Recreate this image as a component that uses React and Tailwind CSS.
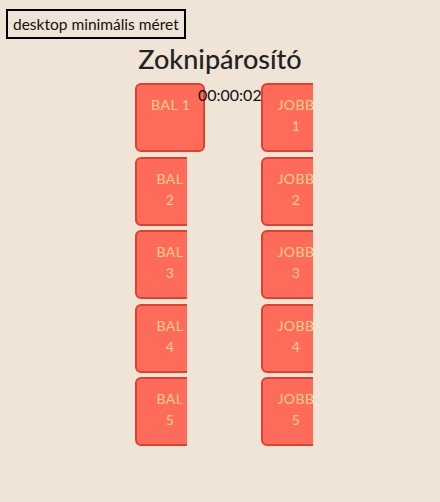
import React from "react";

const rows = [1, 2, 3, 4, 5];

const Sock = ({ label, n, wrap }) => (
  <div className="w-[70px] h-[69px] shrink-0 rounded-[6px] border-2 border-[#e0412f] bg-[#ff6b5b] px-[14px] pt-[9px] text-center text-[14px] leading-[21px] tracking-[0.5px] text-[#fcd28a] font-['Comic_Sans_MS','Lato',sans-serif]">
    {wrap ? (
      <>
        {label}
        <br />
        {n}
      </>
    ) : (
      <span className="whitespace-nowrap">{`${label} ${n}`}</span>
    )}
  </div>
);

const App = () => {
  return (
    <div className="min-h-screen bg-[#f0e4d7] font-['Lato',sans-serif] text-[#111]">
      <div className="pt-[9px] pl-[6px]">
        <div className="inline-block border-2 border-black px-[5px] py-[4px] text-[15.5px] leading-[18px]">
          desktop minimális méret
        </div>
      </div>

      <h1 className="mt-[2px] text-center text-[27px] leading-[36px] font-medium text-[#222] font-['Comic_Sans_MS','Lato',sans-serif]">
        Zoknipárosító
      </h1>

      <div className="mt-[6px] flex flex-col gap-[4.5px] pl-[135px]">
        {rows.map((n) => (
          <div key={n} className="flex h-[69px]">
            <div className={n === 1 ? "w-[52px] relative z-0" : "w-[52px] overflow-hidden"}>
              <Sock label="BAL" n={n} wrap={n !== 1} />
            </div>
            <div className="relative z-20 w-[74px] pl-[11px] whitespace-nowrap text-[16px] leading-[18px] pt-[3px]">
              {n === 1 ? "00:00:02.4" : ""}
            </div>
            <div className="w-[52px] overflow-hidden relative z-30">
              <Sock label="JOBB" n={n} wrap />
            </div>
          </div>
        ))}
      </div>
    </div>
  );
};

export default App;
